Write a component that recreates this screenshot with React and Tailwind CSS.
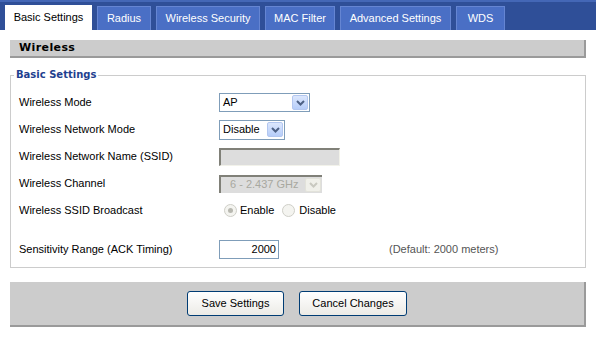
import React from "react";

function Arrow({ disabled }) {
  return (
    <div
      className={
        disabled
          ? "w-[16px] h-[14px] mr-[1px] rounded-[2px] bg-[#f0f0ea] border border-[#e2e2da] flex items-center justify-center"
          : "w-[16px] h-[15px] mr-[1px] rounded-[2px] bg-gradient-to-b from-[#dce7fd] to-[#b6cdf9] border border-[#b3c7f0] flex items-center justify-center"
      }
    >
      <svg width="9" height="6" viewBox="0 0 9 6">
        <path
          d="M1 1 L4.5 4.5 L8 1"
          fill="none"
          stroke={disabled ? "#c9c9c0" : "#4d6185"}
          strokeWidth="2"
        />
      </svg>
    </div>
  );
}

function Radio({ checked }) {
  return (
    <div className="w-[13px] h-[13px] rounded-full border border-[#cfcfc8] bg-[#f4f4f0] flex items-center justify-center">
      {checked && <div className="w-[5px] h-[5px] rounded-full bg-[#b8b8b0]" />}
    </div>
  );
}

function Row({ label, children, className }) {
  return (
    <div className={"flex items-center h-[27px] " + (className || "")}>
      <div className="w-[200px] shrink-0">{label}</div>
      <div className="flex items-center">{children}</div>
    </div>
  );
}

export default function App() {
  const tabs = ["Radius", "Wireless Security", "MAC Filter", "Advanced Settings", "WDS"];
  const widths = ["w-[54px]", "w-[104px]", "w-[70px]", "w-[111px]", "w-[49px]"];
  return (
    <div className="w-[596px] h-[338px] bg-white font-['Liberation_Sans',Arial,sans-serif] text-[11px] text-black overflow-hidden">
      {/* Tab bar */}
      <div className="h-[30px] bg-[#2f4f98] border-t-2 border-[#4467b6] flex items-end pl-[5px] gap-[5px]">
        <div className="w-[87px] h-[25px] bg-white flex items-center justify-center text-black">
          Basic Settings
        </div>
        {tabs.map((t, i) => (
          <div
            key={t}
            className={
              widths[i] +
              " h-[24px] bg-[#4a6fc5] border border-b-0 border-[#6585d2] flex items-center justify-center text-white"
            }
          >
            {t}
          </div>
        ))}
      </div>

      <div className="px-[10px] pt-[10px]">
        {/* Header */}
        <div className="h-[18px] bg-[#cccccc] border-r-2 border-b-2 border-[#9a9a9a] flex items-center pl-[9px]">
          <span className="font-['DejaVu_Sans',sans-serif] font-bold text-[11px] tracking-[0.4px]">Wireless</span>
        </div>

        {/* Fieldset */}
        <fieldset className="mt-[10px] border border-[#cccccc] pl-[8px] pr-[8px] pb-[4px] h-[200px]">
          <legend className="ml-[-5px] px-[2px] font-bold text-[10px] text-[#1f3f8f] font-['DejaVu_Sans',sans-serif] leading-[14px]">
            Basic Settings
          </legend>
          <div className="pt-[7px]">
            <Row label="Wireless Mode">
              <div className="w-[91px] h-[19px] border border-[#7f9db9] bg-white flex items-center justify-between pl-[3px]">
                <span>AP</span>
                <Arrow />
              </div>
            </Row>
            <Row label="Wireless Network Mode">
              <div className="w-[66px] h-[20px] border border-[#7f9db9] bg-white flex items-center justify-between pl-[3px]">
                <span>Disable</span>
                <Arrow />
              </div>
            </Row>
            <Row label="Wireless Network Name (SSID)">
              <div className="w-[121px] h-[18px] bg-[#dddddd] border-t-2 border-l-2 border-r border-b border-t-[#808078] border-l-[#808078] border-r-[#f2f2ea] border-b-[#f2f2ea]" />
            </Row>
            <Row label="Wireless Channel">
              <div className="w-[103px] h-[18px] bg-[#dddddd] border-t-2 border-l-2 border-t-[#808078] border-l-[#808078] flex items-center justify-between pl-[9px] text-[#a8a8a0]">
                <span>6 - 2.437 GHz</span>
                <Arrow disabled />
              </div>
            </Row>
            <Row label="Wireless SSID Broadcast">
              <div className="flex items-center pl-[5px]">
                <Radio checked />
                <span className="ml-[3px]">Enable</span>
                <div className="ml-[8px]">
                  <Radio />
                </div>
                <span className="ml-[4px]">Disable</span>
              </div>
            </Row>
            <Row label="Sensitivity Range (ACK Timing)" className="mt-[12px]">
              <div className="w-[60px] h-[19px] border border-[#7f9db9] bg-white flex items-center justify-end pr-[2px]">
                2000
              </div>
              <span className="ml-[110px] text-[#555555]">(Default: 2000 meters)</span>
            </Row>
          </div>
        </fieldset>

        {/* Button bar */}
        <div className="mt-[14px] h-[45px] bg-[#cccccc] border-r-2 border-b-2 border-[#9a9a9a] flex items-center justify-center gap-[15px]">
          <button className="w-[97px] h-[25px] rounded-[3px] border border-[#003c74] bg-gradient-to-b from-white to-[#ecebe6] text-[11px]">
            Save Settings
          </button>
          <button className="w-[108px] h-[25px] rounded-[3px] border border-[#003c74] bg-gradient-to-b from-white to-[#ecebe6] text-[11px]">
            Cancel Changes
          </button>
        </div>
      </div>
    </div>
  );
}
